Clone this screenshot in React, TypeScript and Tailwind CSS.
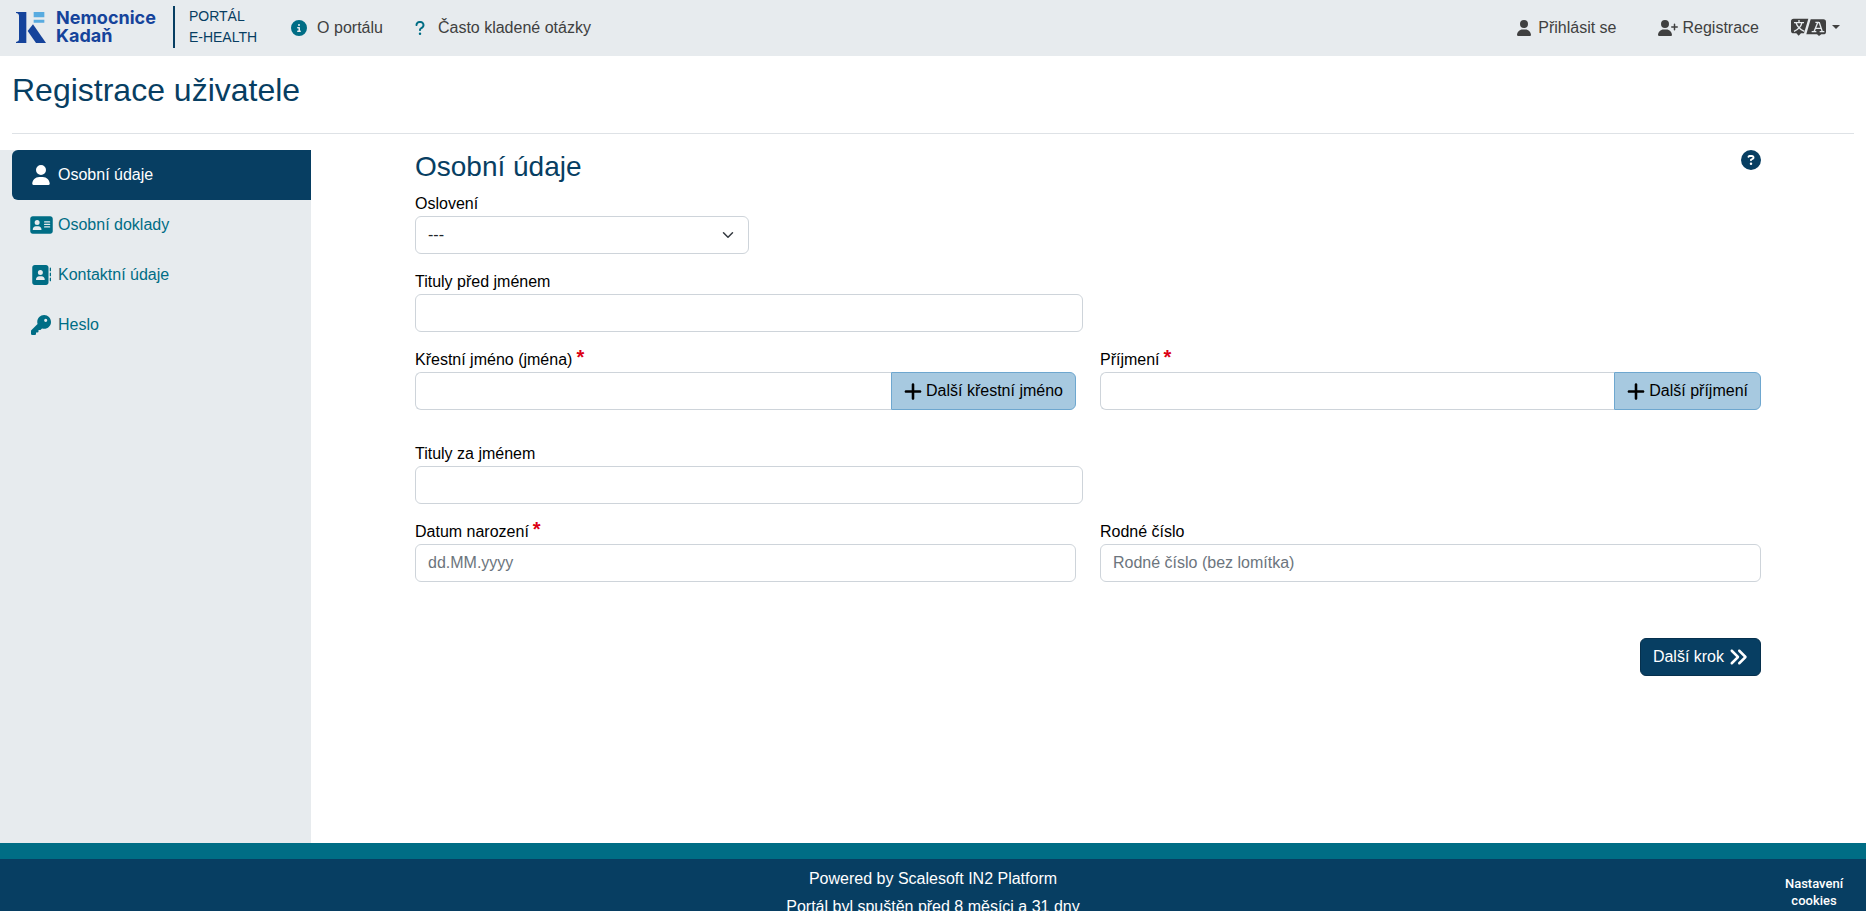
import React from "react";
import {
  FaAddressBook,
  FaAddressCard,
  FaAnglesRight,
  FaCircleInfo,
  FaCircleQuestion,
  FaKey,
  FaPlus,
  FaQuestion,
  FaUser,
  FaUserPlus,
} from "react-icons/fa6";

const inputClass =
  "h-[38px] w-full min-w-0 rounded-md border border-[#ced4da] bg-white px-3 text-base text-[#212529] outline-none placeholder:text-[#6c757d] focus:border-[#006d85]";

function LogoMark() {
  return (
    <svg width="30" height="31" viewBox="0 0 90 93" aria-hidden="true">
      <path
        d="M0 0H31V93H0V90C6 89 9 87 9 82V12C9 7 6 4 0 3Z"
        fill="#15439b"
      />
      <path d="M35 57L51 37L90 93H60Z" fill="#15439b" />
      <path d="M53 0H85V16H53ZM53 23H85V32H53Z" fill="#58abe0" />
    </svg>
  );
}

function LanguageIcon() {
  return (
    <svg width="35" height="18" viewBox="0 0 105 54" aria-hidden="true">
      <path
        d="M8 2H52L39 46H30L23 53L16 46H8Q0 46 0 38V10Q0 2 8 2Z"
        fill="#404040"
      />
      <path
        d="M59 4H97Q105 4 105 12V41Q105 49 97 49H91L84 54L78 49H46Z"
        fill="#404040"
      />
      <path
        d="M9 14H39M24 6V14M33 14C30 26 21 35 9 40M15 14C19 26 28 35 40 40"
        fill="none"
        stroke="#e7ebee"
        strokeWidth="4"
      />
      <path
        d="M69 41L80 14H85L94 41M73 31H91M62 41H76M86 41H100M73 13H84"
        fill="none"
        stroke="#e7ebee"
        strokeWidth="4"
      />
    </svg>
  );
}

function Header() {
  return (
    <header className="flex h-14 items-center bg-[#e7ebee] pl-4 pr-[26px] text-[#404040]">
      <a href="#" className="flex items-center pb-[2px]">
        <LogoMark />
        <span className="ml-[10px] font-[Inter,sans-serif] text-[18px] font-bold leading-[18px] text-[#15439b]">
          Nemocnice
          <br />
          Kadaň
        </span>
        <span className="ml-[17px] h-[42px] w-[2px] bg-[#073e62]" />
        <span className="ml-[14px] text-sm leading-[21px] text-[#073e62]">
          PORTÁL
          <br />
          E-HEALTH
        </span>
      </a>
      <nav className="ml-[34px] flex flex-1 items-center">
        <a href="#" className="flex items-center gap-[10px]">
          <FaCircleInfo className="size-4 text-[#006d85]" />
          O portálu
        </a>
        <a href="#" className="ml-8 flex items-center gap-[13px]">
          <FaQuestion className="h-4 w-[10px] text-[#006d85]" />
          Často kladené otázky
        </a>
        <a href="#" className="ml-auto flex items-center gap-[7px]">
          <FaUser className="h-4 w-[14px]" />
          Přihlásit se
        </a>
        <a href="#" className="ml-[41px] flex items-center gap-[5px]">
          <FaUserPlus className="h-4 w-5" />
          Registrace
        </a>
        <button
          type="button"
          aria-label="Jazyk"
          className="ml-8 flex items-center gap-[6px] pb-[3px]"
        >
          <LanguageIcon />
          <span className="border-x-4 border-t-4 border-x-transparent border-t-[#404040]" />
        </button>
      </nav>
    </header>
  );
}

const steps = [
  { label: "Osobní údaje", Icon: FaUser, size: "h-5 w-[18px]", active: true },
  {
    label: "Osobní doklady",
    Icon: FaAddressCard,
    size: "h-5 w-[23px]",
    active: false,
  },
  {
    label: "Kontaktní údaje",
    Icon: FaAddressBook,
    size: "size-5",
    active: false,
  },
  { label: "Heslo", Icon: FaKey, size: "size-5", active: false },
];

function Sidebar() {
  return (
    <aside className="w-1/6 shrink-0 bg-[#e7ebee] pl-3">
      <ul>
        {steps.map(({ label, Icon, size, active }) => (
          <li key={label}>
            <a
              href="#"
              className={
                active
                  ? "flex h-[50px] items-center gap-1 rounded-l-md bg-[#073e62] pl-4 text-white"
                  : "flex h-[50px] items-center gap-1 pl-4 text-[#006d85]"
              }
            >
              <span className="flex w-[26px] justify-center">
                <Icon className={size} />
              </span>
              {label}
            </a>
          </li>
        ))}
      </ul>
    </aside>
  );
}

function Label({
  id,
  required,
  children,
}: {
  id: string;
  required?: boolean;
  children: React.ReactNode;
}) {
  return (
    <label htmlFor={id} className="flex h-6 items-center gap-1 text-black">
      {children}
      {required && (
        <span className="self-start text-[20px] font-bold leading-[18px] text-[#dc0014]">
          *
        </span>
      )}
    </label>
  );
}

function NameField({
  id,
  label,
  action,
}: {
  id: string;
  label: string;
  action: string;
}) {
  return (
    <div>
      <Label id={id} required>
        {label}
      </Label>
      <div className="flex">
        <input
          id={id}
          type="text"
          className="h-[38px] min-w-0 flex-1 rounded-l-md border border-r-0 border-[#ced4da] bg-white px-3 outline-none"
        />
        <button
          type="button"
          className="flex h-[38px] items-center gap-1 rounded-r-md border border-[#6ea7cf] bg-[#a7c9e0] px-3 text-black"
        >
          <FaPlus className="h-[21px] w-[18px]" />
          {action}
        </button>
      </div>
    </div>
  );
}

function PersonalForm() {
  return (
    <form className="flex-1 pl-[104px] pr-[105px]">
      <div className="mb-2 flex items-start justify-between">
        <h2 className="text-[28px] leading-[34px] text-[#073e62]">
          Osobní údaje
        </h2>
        <button type="button" aria-label="Nápověda">
          <FaCircleQuestion className="size-5 text-[#073e62]" />
        </button>
      </div>

      <div className="flex flex-col gap-4">
        <div className="w-[calc(25%-2px)]">
          <Label id="salutation">Oslovení</Label>
          <div className="grid items-center">
            <select
              id="salutation"
              className={`${inputClass} col-start-1 row-start-1 appearance-none`}
            >
              <option>---</option>
            </select>
            <svg
              className="pointer-events-none col-start-1 row-start-1 mr-[15px] justify-self-end"
              width="12"
              height="12"
              viewBox="0 0 16 16"
              fill="none"
              stroke="#343a40"
              strokeWidth="2"
              strokeLinecap="round"
              strokeLinejoin="round"
              aria-hidden="true"
            >
              <path d="m2 5 6 6 6-6" />
            </svg>
          </div>
        </div>

        <div className="w-[calc(50%-5px)]">
          <Label id="title-before">Tituly před jménem</Label>
          <input id="title-before" type="text" className={inputClass} />
        </div>

        <div className="mb-4 grid grid-cols-2 gap-6">
          <NameField
            id="first-name"
            label="Křestní jméno (jména)"
            action="Další křestní jméno"
          />
          <NameField id="last-name" label="Příjmení" action="Další příjmení" />
        </div>

        <div className="w-[calc(50%-5px)]">
          <Label id="title-after">Tituly za jménem</Label>
          <input id="title-after" type="text" className={inputClass} />
        </div>

        <div className="grid grid-cols-2 gap-6">
          <div>
            <Label id="birth-date" required>
              Datum narození
            </Label>
            <input
              id="birth-date"
              type="text"
              placeholder="dd.MM.yyyy"
              className={inputClass}
            />
          </div>
          <div>
            <Label id="birth-number">Rodné číslo</Label>
            <input
              id="birth-number"
              type="text"
              placeholder="Rodné číslo (bez lomítka)"
              className={inputClass}
            />
          </div>
        </div>
      </div>

      <div className="mt-14 flex justify-end">
        <button
          type="button"
          className="flex h-[38px] items-center gap-1 rounded-md border border-[#06304d] bg-[#073e62] px-3 text-white"
        >
          Další krok
          <FaAnglesRight className="size-5" />
        </button>
      </div>
    </form>
  );
}

function Footer() {
  return (
    <footer className="relative h-[68px] overflow-hidden border-t-[16px] border-[#006d85] bg-[#073e62] text-white">
      <div className="flex flex-col items-center gap-1 pt-2">
        <p>Powered by Scalesoft IN2 Platform</p>
        <p>Portál byl spuštěn před 8 měsíci a 31 dny</p>
      </div>
      <button
        type="button"
        className="absolute right-5 top-4 w-16 font-[Roboto,sans-serif] text-[13px] font-medium leading-[17px]"
      >
        Nastavení cookies
      </button>
    </footer>
  );
}

export default function App() {
  return (
    <div className="flex min-h-screen flex-col bg-white font-['Liberation_Sans',Arial,sans-serif] text-base">
      <Header />
      <div className="px-3 pt-[15px]">
        <h1 className="text-[32px] leading-[38px] text-[#073e62]">
          Registrace uživatele
        </h1>
        <hr className="mb-4 mt-6 border-[#dee2e6]" />
      </div>
      <main className="flex flex-1">
        <Sidebar />
        <PersonalForm />
      </main>
      <Footer />
    </div>
  );
}
